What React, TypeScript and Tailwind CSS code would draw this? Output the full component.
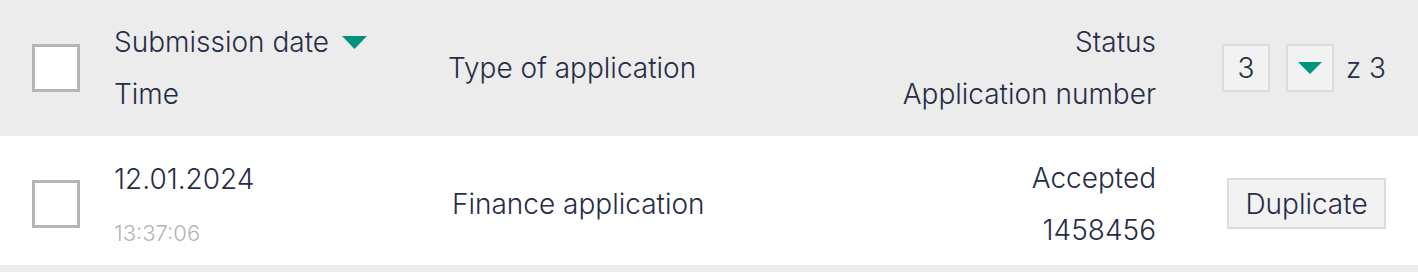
import React from "react";

function Checkbox() {
  return <div className="w-12 h-12 shrink-0 bg-white border-[3px] border-[#b5b5b5]" />;
}

function Caret({ w, h }: { w: number; h: number }) {
  return (
    <svg width={w} height={h} viewBox={`0 0 ${w} ${h}`} className="shrink-0">
      <path d={`M0 0 H${w} L${w / 2} ${h} Z`} fill="#00937c" />
    </svg>
  );
}

export default function App() {
  return (
    <div
      className="w-[1418px] h-[272px] bg-[#ececec] text-[#262d47] text-[28px] font-light"
      style={{ fontFamily: '"Inter", "Liberation Sans", sans-serif' }}
    >
      {/* Header */}
      <div className="h-[136px] flex items-center pl-8 pr-8 bg-[#ececec]">
        <Checkbox />
        <div className="ml-[34px] w-[334px] flex flex-col gap-[14px] leading-[38px]">
          <div className="flex items-center gap-[13px]">
            <span>Submission date</span>
            <Caret w={25} h={13} />
          </div>
          <span>Time</span>
        </div>
        <div className="flex-1">Type of application</div>
        <div className="flex flex-col items-end gap-[14px] leading-[38px]">
          <span>Status</span>
          <span>Application number</span>
        </div>
        <div className="ml-[66px] w-[164px] shrink-0 flex items-center justify-end whitespace-nowrap">
          <div className="w-12 h-12 shrink-0 flex items-center justify-center bg-[#f2f2f2] border-2 border-[#dcdcdc]">3</div>
          <div className="ml-4 w-12 h-12 shrink-0 flex items-center justify-center bg-[#f2f2f2] border-2 border-[#dcdcdc]">
            <Caret w={24} h={12} />
          </div>
          <span className="ml-3 shrink-0">z 3</span>
        </div>
      </div>

      {/* Row */}
      <div className="h-[129px] pt-[6px] flex items-center pl-8 pr-8 bg-white">
        <Checkbox />
        <div className="ml-[34px] w-[338px] flex flex-col gap-[22px]">
          <span className="leading-[36px]">12.01.2024</span>
          <span className="text-[22px] leading-[28px] text-[#b3b3b3]">13:37:06</span>
        </div>
        <div className="flex-1">Finance application</div>
        <div className="flex flex-col items-end gap-[14px] leading-[38px]">
          <span>Accepted</span>
          <span>1458456</span>
        </div>
        <div className="ml-[66px] w-[164px] shrink-0 flex justify-end">
          <button className="w-[159px] h-[51px] bg-[#f2f2f2] border-2 border-[#dcdcdc] text-[#262d47]">
            Duplicate
          </button>
        </div>
      </div>
    </div>
  );
}
